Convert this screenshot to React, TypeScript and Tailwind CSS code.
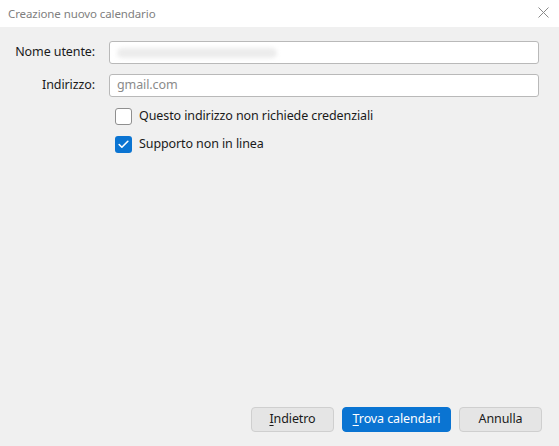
import { Check } from 'lucide-react';

const font = { fontFamily: '"Segoe UI", "Noto Sans", "Open Sans", sans-serif' };

function Field({ label, placeholder, blurred }: { label: string; placeholder?: string; blurred?: boolean }) {
  return (
    <div className="flex items-center h-[23px]">
      <label className="w-[95px] text-right text-[12.5px] tracking-[-0.1px] text-[#1a1a1a] leading-none">{label}</label>
      <div className="ml-[14px] flex-1 h-full bg-white border border-[#b9b9b9] rounded-[3px] flex items-center px-[7px]">
        {blurred ? (
          <div className="h-[10px] w-[160px] rounded-full bg-[#ececec] blur-[2px]" />
        ) : (
          <span className="text-[12.5px] tracking-[-0.1px] text-[#8a8a8a] leading-none">{placeholder}</span>
        )}
      </div>
    </div>
  );
}

function CheckRow({ checked, label }: { checked?: boolean; label: string }) {
  return (
    <div className="flex items-center gap-[7px] h-[17px]">
      <div
        className={[
          'w-[17px] h-[17px] rounded-[3px] flex items-center justify-center',
          checked ? 'bg-[#0a74d2]' : 'bg-white border border-[#8f8f8f]',
        ].join(' ')}
      >
        {checked && <Check size={13} strokeWidth={3} color="white" />}
      </div>
      <span className="text-[12.5px] tracking-[-0.1px] text-[#1a1a1a] leading-none">{label}</span>
    </div>
  );
}

export default function App() {
  return (
    <div className="w-[559px] h-[446px] bg-[#f0f0f0] flex flex-col overflow-hidden" style={font}>
      <div className="h-[27px] bg-white flex items-center justify-between pl-[8px] pr-[10px] shrink-0">
        <span className="text-[11.5px] tracking-[-0.1px] text-[#808080]">Creazione nuovo calendario</span>
        <svg width="11" height="11" viewBox="0 0 11 11" className="mt-[-2px]">
          <path d="M0.5 0.5 L10.5 10.5 M10.5 0.5 L0.5 10.5" stroke="#8a8a8a" strokeWidth="1" />
        </svg>
      </div>

      <div className="flex-1 flex flex-col pr-[20px] pt-[14px]">
        <Field label="Nome utente:" blurred />
        <div className="h-[10px]" />
        <Field label="Indirizzo:" placeholder="gmail.com" />
        <div className="pl-[115px] pt-[11px] flex flex-col gap-[11px]">
          <CheckRow label="Questo indirizzo non richiede credenziali" />
          <CheckRow checked label="Supporto non in linea" />
        </div>
      </div>

      <div className="flex justify-end gap-[8px] pr-[17px] pb-[14px] shrink-0">
        <button className="w-[83px] h-[25px] bg-[#e5e5e5] border border-[#cfcfcf] rounded-[4px] text-[12.5px] tracking-[-0.1px] text-[#1a1a1a]">
          <span className="underline underline-offset-2">I</span>ndietro
        </button>
        <button className="w-[109px] h-[25px] bg-[#0a74d2] border border-[#0a74d2] rounded-[4px] text-[12.5px] tracking-[-0.1px] text-white">
          <span className="underline underline-offset-2">T</span>rova calendari
        </button>
        <button className="w-[83px] h-[25px] bg-[#e5e5e5] border border-[#cfcfcf] rounded-[4px] text-[12.5px] tracking-[-0.1px] text-[#1a1a1a]">
          Annulla
        </button>
      </div>
    </div>
  );
}
